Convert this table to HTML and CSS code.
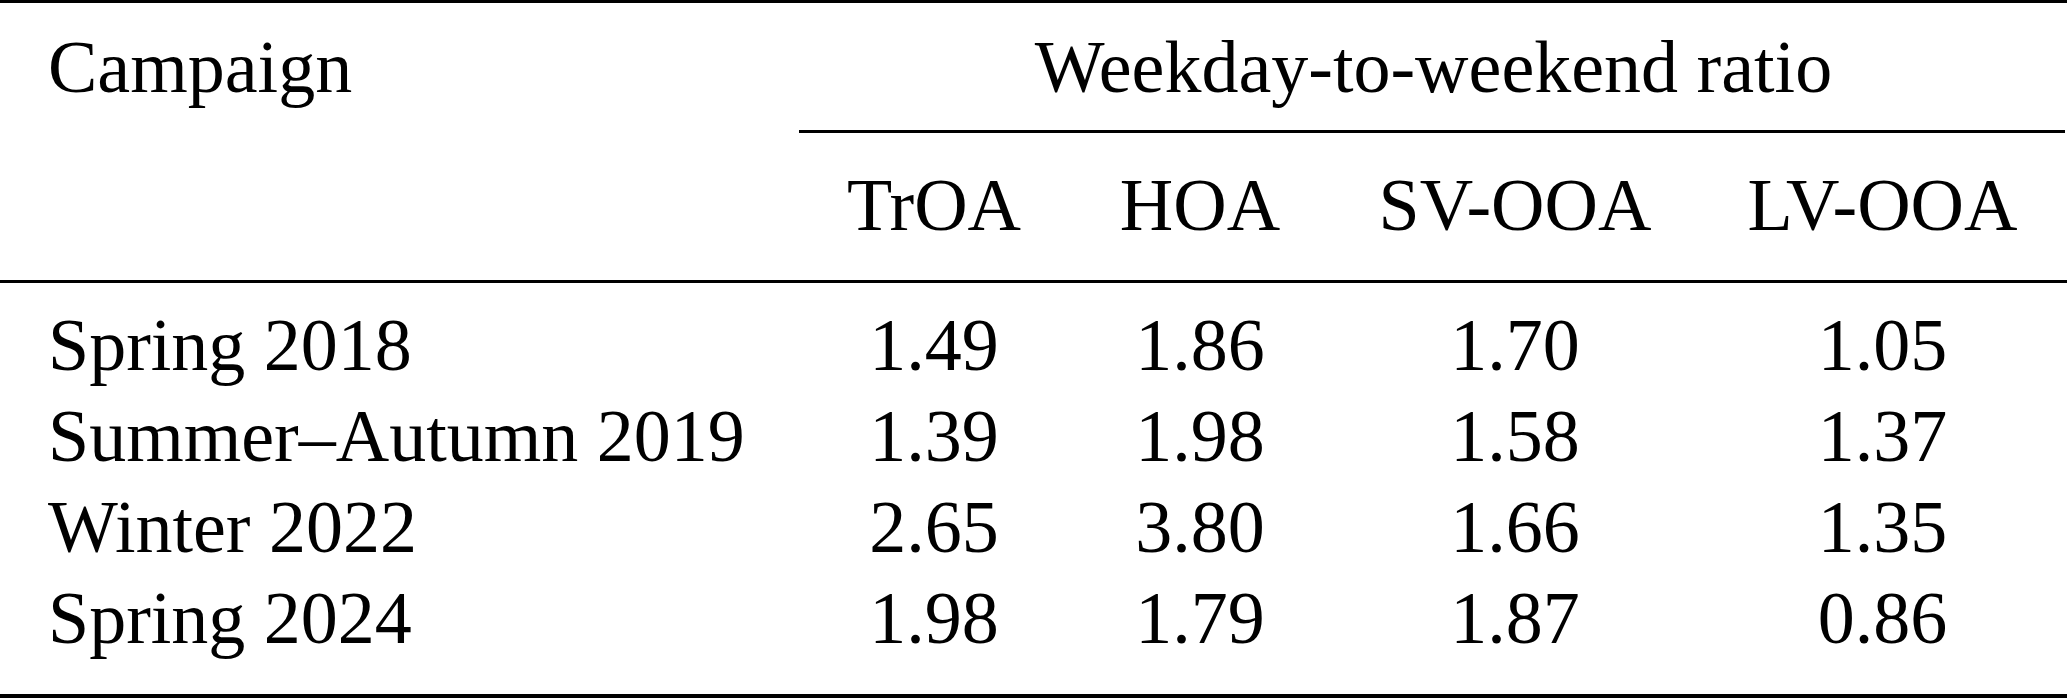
FILE: index.html
```html
<!DOCTYPE html>
<html lang="en">
<head>
<meta charset="utf-8">
<title>Weekday-to-weekend ratio</title>
<link rel="stylesheet" href="styles.css">
</head>
<body>
<div class="table">
  <div class="rule rule-top"></div>
  <div class="row head-1">
    <div class="cell first">Campaign</div>
    <div class="cell span">Weekday-to-weekend ratio</div>
  </div>
  <div class="rule rule-cmid"></div>
  <div class="row head-2">
    <div class="cell first"></div>
    <div class="cell">TrOA</div>
    <div class="cell">HOA</div>
    <div class="cell">SV-OOA</div>
    <div class="cell">LV-OOA</div>
  </div>
  <div class="rule rule-mid"></div>
  <div class="body">
    <div class="row">
      <div class="cell first">Spring 2018</div>
      <div class="cell">1.49</div>
      <div class="cell">1.86</div>
      <div class="cell">1.70</div>
      <div class="cell">1.05</div>
    </div>
    <div class="row">
      <div class="cell first">Summer–Autumn 2019</div>
      <div class="cell">1.39</div>
      <div class="cell">1.98</div>
      <div class="cell">1.58</div>
      <div class="cell">1.37</div>
    </div>
    <div class="row">
      <div class="cell first">Winter 2022</div>
      <div class="cell">2.65</div>
      <div class="cell">3.80</div>
      <div class="cell">1.66</div>
      <div class="cell">1.35</div>
    </div>
    <div class="row">
      <div class="cell first">Spring 2024</div>
      <div class="cell">1.98</div>
      <div class="cell">1.79</div>
      <div class="cell">1.87</div>
      <div class="cell">0.86</div>
    </div>
  </div>
  <div class="rule rule-bottom"></div>
</div>
</body>
</html>
```

FILE: styles.css
```css
html, body {
  margin: 0;
  padding: 0;
  background: #ffffff;
}

body {
  width: 2067px;
  height: 698px;
  overflow: hidden;
  font-family: "Liberation Serif", "Times New Roman", serif;
  font-size: 74px;
  line-height: 91px;
  color: #000000;
}

.table {
  display: flex;
  flex-direction: column;
  width: 2067px;
}

.rule {
  background: #000000;
}

.rule-top {
  height: 3px;
}

.rule-cmid {
  height: 3px;
  margin-left: 799px;
  margin-right: 2px;
}

.rule-mid {
  height: 3px;
}

.rule-bottom {
  height: 4px;
}

.row {
  display: grid;
  grid-template-columns: 800px 268px 264px 366px 1fr;
  height: 91px;
}

.cell {
  text-align: center;
  white-space: nowrap;
}

.cell.first {
  text-align: left;
  padding-left: 48px;
}

.cell.span {
  grid-column: 2 / -1;
}

.head-1 {
  margin-top: 19px;
  margin-bottom: 17px;
}

.head-2 {
  margin-top: 27px;
  margin-bottom: 29px;
}

.body {
  display: flex;
  flex-direction: column;
  padding-top: 17px;
  padding-bottom: 30px;
}
```
